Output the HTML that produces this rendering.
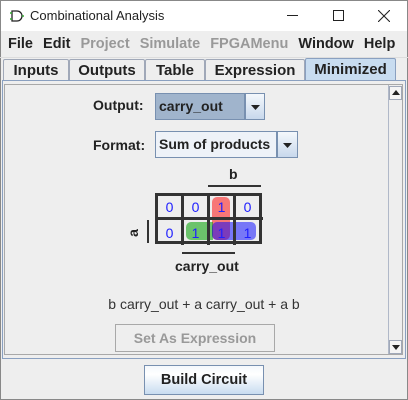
<!DOCTYPE html>
<html><head><style>
*{margin:0;padding:0;box-sizing:border-box}
body{width:408px;height:400px;background:#eeeeee;position:relative;overflow:hidden;font-family:"Liberation Sans",sans-serif;font-weight:bold;font-size:14px;color:#222}
.a{position:absolute}
.tab{position:absolute;top:59px;height:22px;border:1px solid #a0a8b8;border-bottom:none;background:#eeeeee;font-size:15px;text-align:center;line-height:21px;border-radius:2px 2px 0 0}
.cell{position:absolute;width:23px;height:21px;text-align:center;font-weight:normal;font-size:14px;color:#2020ff;line-height:21px}
</style></head><body>
<div class="a" style="left:0;top:0;width:408px;height:400px;border:1px solid #888"></div>
<div class="a" style="left:1px;top:1px;width:406px;height:30px;background:#fff"></div>
<svg class="a" style="left:9px;top:9px" width="16" height="14"><path d="M3 2h5a5 5 0 0 1 0 10H3z" fill="none" stroke="#222" stroke-width="1.3"/><path d="M1 4h2M1 10h2M13 7h2" stroke="#3a3" stroke-width="1.5"/></svg>
<div class="a" style="left:30px;top:8px;font-weight:normal;font-size:13px">Combinational Analysis</div>
<div class="a" style="left:287px;top:15px;width:11px;height:1px;background:#222"></div>
<div class="a" style="left:333px;top:10px;width:11px;height:11px;border:1px solid #222"></div>
<svg class="a" style="left:378px;top:10px" width="12" height="12"><path d="M0 0L12 12M12 0L0 12" stroke="#222" stroke-width="1.1"/></svg>
<div class="a" style="left:8px;top:36px;font-size:14.5px;word-spacing:1px">File&nbsp; Edit&nbsp; <span style="color:#999">Project&nbsp; Simulate&nbsp; FPGAMenu</span>&nbsp; Window&nbsp; Help</div>
<div class="a" style="left:0;top:57px;width:408px;height:1px;background:#ddd"></div>
<div class="tab" style="left:3px;width:66px">Inputs</div>
<div class="tab" style="left:69px;width:76px">Outputs</div>
<div class="tab" style="left:145px;width:60px">Table</div>
<div class="tab" style="left:205px;width:100px">Expression</div>
<div class="tab" style="left:305px;width:91px;background:#c8dcf0;border-color:#8aa0c0;top:58px;height:23px">Minimized</div>
<div class="a" style="left:2px;top:80px;width:404px;height:279px;border:1px solid #8aa0c0"></div>
<div class="a" style="left:4px;top:84px;width:399px;height:271px;border:1px solid #a8a8a8"></div>
<div class="a" style="left:388px;top:85px;width:14px;height:269px;border-left:1px solid #b0b8c8;background:#eee"></div>
<div class="a" style="left:389px;top:86px;width:13px;height:14px;border:1px solid #a0a8b8;background:#f4f4f4"></div>
<svg class="a" style="left:392px;top:90px" width="8" height="5"><path d="M0 5L4 0L8 5z" fill="#222"/></svg>
<div class="a" style="left:389px;top:340px;width:13px;height:14px;border:1px solid #a0a8b8;background:#f4f4f4"></div>
<svg class="a" style="left:392px;top:345px" width="8" height="5"><path d="M0 0L4 5L8 0z" fill="#222"/></svg>

<div class="a" style="left:93px;top:97px">Output:</div>
<div class="a" style="left:155px;top:93px;width:90px;height:27px;background:#a0b4cc;border:1px solid #7890b0;padding:4px 3px;line-height:17px">carry_out</div>
<div class="a" style="left:245px;top:93px;width:20px;height:27px;border:1px solid #7890b0;background:linear-gradient(#f4f8fc,#c8d8ec)"></div>
<svg class="a" style="left:251px;top:105px" width="9" height="5"><path d="M0 0L4.5 5L9 0z" fill="#222"/></svg>
<div class="a" style="left:93px;top:137px">Format:</div>
<div class="a" style="left:155px;top:131px;width:122px;height:27px;background:#eef2f8;border:1px solid #7890b0;padding:4px 3px;line-height:17px">Sum of products</div>
<div class="a" style="left:277px;top:131px;width:21px;height:27px;border:1px solid #7890b0;background:linear-gradient(#f4f8fc,#c8d8ec)"></div>
<svg class="a" style="left:283px;top:143px" width="9" height="5"><path d="M0 0L4.5 5L9 0z" fill="#222"/></svg>

<div class="a" style="left:229px;top:166px">b</div>
<div class="a" style="left:208px;top:185px;width:53px;height:2px;background:#333"></div>
<div class="a" style="left:129px;top:225px;transform:rotate(-90deg)">a</div>
<div class="a" style="left:147px;top:220px;width:2px;height:23px;background:#333"></div>
<div class="a" style="left:212px;top:197px;width:18px;height:43px;background:rgba(255,0,0,.5);border-radius:5px"></div>
<div class="a" style="left:186px;top:222px;width:27px;height:18px;background:rgba(0,160,0,.55);border-radius:5px 0 0 5px"></div>
<div class="a" style="left:212px;top:222px;width:44px;height:18px;background:rgba(0,0,255,.5);border-radius:5px"></div>
<div class="a" style="left:212px;top:222px;width:1px;height:18px"></div>
<svg class="a" style="left:155px;top:193px" width="108" height="52"><g fill="none" stroke="#333" stroke-width="3"><rect x="1.5" y="1.5" width="104" height="48"/><path d="M27.5 0v52M53.5 0v52M79.5 0v52M0 25.5h108"/></g></svg>
<div class="cell" style="left:158px;top:197px">0</div>
<div class="cell" style="left:184px;top:197px">0</div>
<div class="cell" style="left:210px;top:197px">1</div>
<div class="cell" style="left:236px;top:197px">0</div>
<div class="cell" style="left:158px;top:223px">0</div>
<div class="cell" style="left:184px;top:223px">1</div>
<div class="cell" style="left:210px;top:223px">1</div>
<div class="cell" style="left:236px;top:223px">1</div>
<div class="a" style="left:182px;top:252px;width:53px;height:2px;background:#333"></div>
<div class="a" style="left:175px;top:258px">carry_out</div>

<div class="a" style="left:0;top:296px;width:408px;text-align:center;font-weight:normal;font-size:14px;color:#333">b carry_out + a carry_out + a b</div>
<div class="a" style="left:115px;top:324px;width:160px;height:28px;border:1px solid #a8a8a8;text-align:center;line-height:26px;color:#999">Set As Expression</div>
<div class="a" style="left:144px;top:365px;width:120px;height:30px;border:1px solid #7890b0;background:linear-gradient(#f4f8fc,#fff 30%,#c8dcf0);text-align:center;line-height:28px;font-size:14.5px">Build Circuit</div>
</body></html>
